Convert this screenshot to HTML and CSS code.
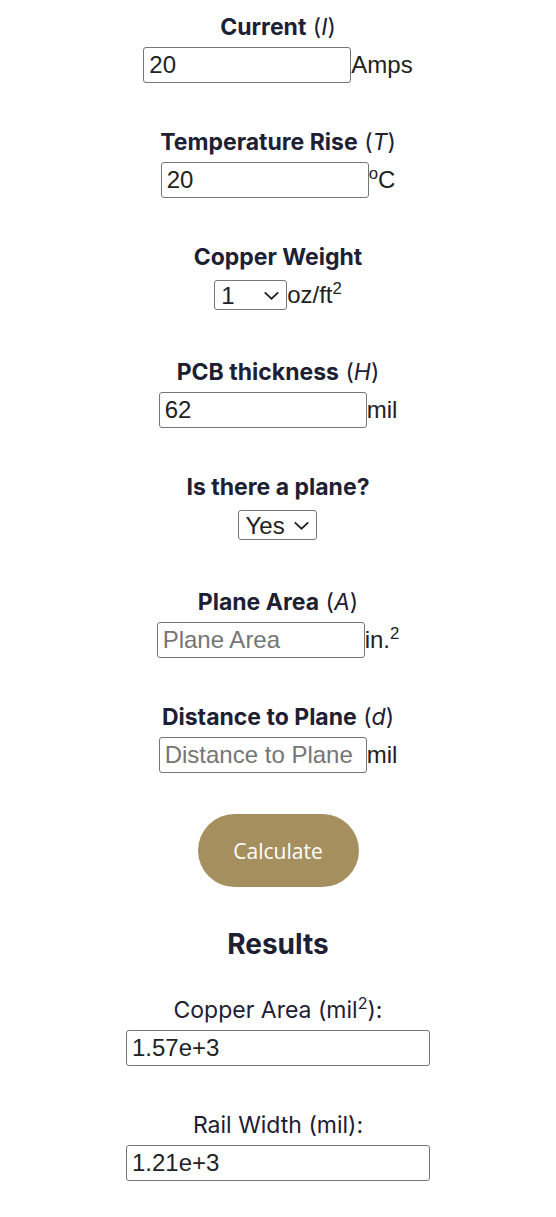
FILE: index.html
```html
<!DOCTYPE html>
<html lang="en">
<head>
<meta charset="utf-8">
<title>PCB Trace Calculator</title>
<link rel="stylesheet" href="styles.css">
</head>
<body>
<main class="calc">
  <div class="field">
    <label class="label" for="current"><strong>Current</strong> (<i>I</i>)</label>
    <div class="row"><input class="box" id="current" type="text" value="20"><span class="unit">Amps</span></div>
  </div>
  <div class="field">
    <label class="label" for="temp"><strong>Temperature Rise</strong> (<i>T</i>)</label>
    <div class="row"><input class="box" id="temp" type="text" value="20"><span class="unit"><sup>o</sup>C</span></div>
  </div>
  <div class="field">
    <label class="label" for="weight"><strong>Copper Weight</strong></label>
    <div class="row"><select class="sel sel-weight" id="weight"><option>1</option><option>2</option></select><span class="unit">oz/ft<sup>2</sup></span></div>
  </div>
  <div class="field">
    <label class="label" for="thick"><strong>PCB thickness</strong> (<i>H</i>)</label>
    <div class="row"><input class="box" id="thick" type="text" value="62"><span class="unit">mil</span></div>
  </div>
  <div class="field">
    <label class="label" for="plane"><strong>Is there a plane?</strong></label>
    <div class="row"><select class="sel sel-plane" id="plane"><option>Yes</option><option>No</option></select></div>
  </div>
  <div class="field">
    <label class="label" for="area"><strong>Plane Area</strong> (<i>A</i>)</label>
    <div class="row"><input class="box" id="area" type="text" placeholder="Plane Area"><span class="unit">in.<sup>2</sup></span></div>
  </div>
  <div class="field">
    <label class="label" for="dist"><strong>Distance to Plane</strong> (<i>d</i>)</label>
    <div class="row"><input class="box" id="dist" type="text" placeholder="Distance to Plane"><span class="unit">mil</span></div>
  </div>
  <button class="btn" type="button">Calculate</button>
  <h2 class="results-title">Results</h2>
  <div class="field">
    <label class="label result-label" for="carea">Copper Area (mil<sup>2</sup>):</label>
    <div class="row"><input class="box wide" id="carea" type="text" value="1.57e+3"></div>
  </div>
  <div class="field">
    <label class="label result-label" for="rwidth">Rail Width (mil):</label>
    <div class="row"><input class="box wide" id="rwidth" type="text" value="1.21e+3"></div>
  </div>
</main>
</body>
</html>
```

FILE: styles.css
```css
html, body {
  margin: 0;
  padding: 0;
  background: #ffffff;
}

.calc {
  display: flex;
  flex-direction: column;
  align-items: center;
  padding-top: 13px;
  font-family: "Liberation Sans", Arial, sans-serif;
  color: #222222;
}

.field {
  display: flex;
  flex-direction: column;
  align-items: center;
  gap: 6px;
  margin-bottom: 45px;
}

.label {
  font-family: Inter, "Noto Sans", sans-serif;
  font-size: 23px;
  line-height: 28px;
  height: 28px;
  color: #1d2033;
  font-weight: 400;
  white-space: nowrap;
}

.label strong {
  font-weight: 700;
}

.label sup, .unit sup {
  font-size: 0.7em;
  line-height: 0;
  vertical-align: super;
}

.row {
  display: flex;
  align-items: center;
  justify-content: center;
  height: 36px;
}

.box {
  box-sizing: border-box;
  width: 208px;
  height: 36px;
  margin: 0;
  padding: 0 5px;
  border: 1px solid #767676;
  border-radius: 3px;
  font-family: "Liberation Sans", Arial, sans-serif;
  font-size: 24px;
  color: #222222;
  background: #ffffff;
}

.box::placeholder {
  color: #757575;
}

.box.wide {
  width: 304px;
}

.unit {
  font-size: 24px;
  line-height: 28px;
  color: #222222;
}

.sel {
  -webkit-appearance: none;
  appearance: none;
  box-sizing: border-box;
  height: 30px;
  margin: 0;
  padding: 0 0 0 6px;
  border: 1px solid #767676;
  border-radius: 3px;
  font-family: "Liberation Sans", Arial, sans-serif;
  font-size: 24px;
  color: #222222;
  background-color: #ffffff;
  background-image: url("data:image/svg+xml,%3Csvg xmlns='http://www.w3.org/2000/svg' width='18' height='10' viewBox='0 0 18 10'%3E%3Cpath d='M1.5 1.5 L9 8.5 L16.5 1.5' fill='none' stroke='%23222' stroke-width='2'/%3E%3C/svg%3E");
  background-repeat: no-repeat;
  background-size: 17px 9px;
  background-position: right 6px center;
}

.sel-weight {
  width: 73px;
}

.sel-plane {
  width: 79px;
}

.btn {
  width: 161px;
  height: 73px;
  margin: -4px 0 0;
  border: none;
  border-radius: 37px;
  background: #a68f5e;
  color: #ffffff;
  font-family: "Open Sans", sans-serif;
  font-size: 21px;
  cursor: pointer;
}

.results-title {
  margin: 40px 0 35px;
  font-family: Inter, "Noto Sans", sans-serif;
  font-size: 28px;
  line-height: 34px;
  font-weight: 700;
  color: #1d2033;
}

.result-label {
  font-weight: 400;
}
```
